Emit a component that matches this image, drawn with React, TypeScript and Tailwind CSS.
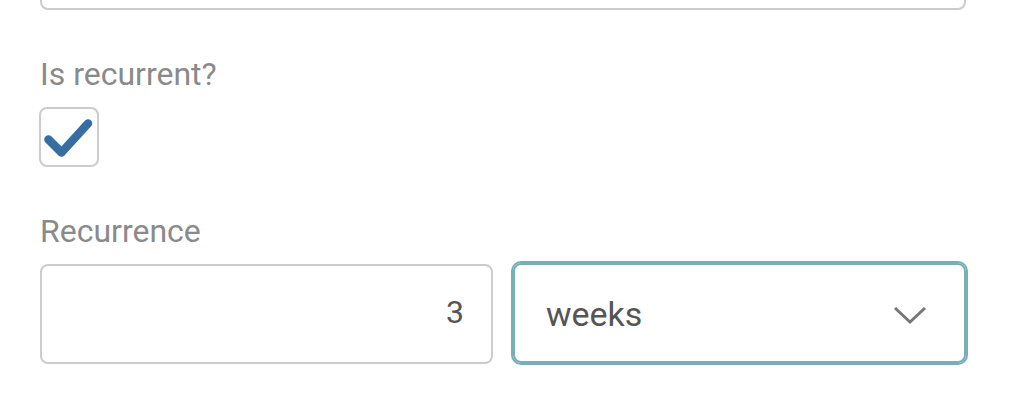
import { useState } from 'react';

const labelClass = 'block text-[32px] leading-[38px] text-[#8a8a8a]';

export default function App() {
  const [recurrent, setRecurrent] = useState(true);
  const [count, setCount] = useState('3');
  const [unit, setUnit] = useState('weeks');

  return (
    <div className="h-[406px] w-[1034px] overflow-hidden bg-white font-['Roboto',sans-serif]">
      <div className="ml-[40px] w-[926px]">
        {/* tail of the field above, scrolled mostly out of view */}
        <div className="-mt-[50px] h-[60px] rounded-[8px] border-2 border-[#cccccc] bg-white" />

        <div className="mt-[45px]">
          <label className={labelClass}>Is recurrent?</label>
          <button
            type="button"
            onClick={() => setRecurrent(!recurrent)}
            className="mt-[14px] flex h-[60px] w-[60px] items-center justify-center rounded-[8px] border-2 border-[#cccccc] bg-white -ml-px"
          >
            {recurrent && (
              <svg width="60" height="60" viewBox="0 0 60 60" className="-m-[2px]">
                <path
                  d="M9.5 32.5 L22.5 45.5 L49 16.5"
                  fill="none"
                  stroke="#386da3"
                  strokeWidth="8.5"
                  strokeLinecap="round"
                  strokeLinejoin="round"
                />
              </svg>
            )}
          </button>
        </div>

        <div className="mt-[45px]">
          <label className={labelClass}>Recurrence</label>
          <div className="mt-[14px] grid grid-cols-2 gap-[20px]">
            <input
              value={count}
              onChange={(e) => setCount(e.target.value)}
              className="h-[100px] w-full rounded-[8px] border-2 border-[#cccccc] bg-white px-[27px] pb-[4px] text-right text-[32px] text-[#555555] outline-none"
            />
            <div className="relative h-[100px] -mt-[1px] rounded-[8px] border-2 border-[#76afb6] shadow-[0_0_0_2px_#76afb6]">
              <select
                value={unit}
                onChange={(e) => setUnit(e.target.value)}
                className="h-full w-full appearance-none bg-transparent pl-[31px] pt-[2px] text-[34px] text-[#555555] outline-none"
              >
                <option value="days">days</option>
                <option value="weeks">weeks</option>
                <option value="months">months</option>
              </select>
              <svg
                width="34"
                height="20"
                viewBox="0 0 34 20"
                className="pointer-events-none absolute right-[37px] top-[40px]"
              >
                <path d="M2 3 L17 17 L32 3" fill="none" stroke="#777777" strokeWidth="3" />
              </svg>
            </div>
          </div>
        </div>
      </div>
    </div>
  );
}
